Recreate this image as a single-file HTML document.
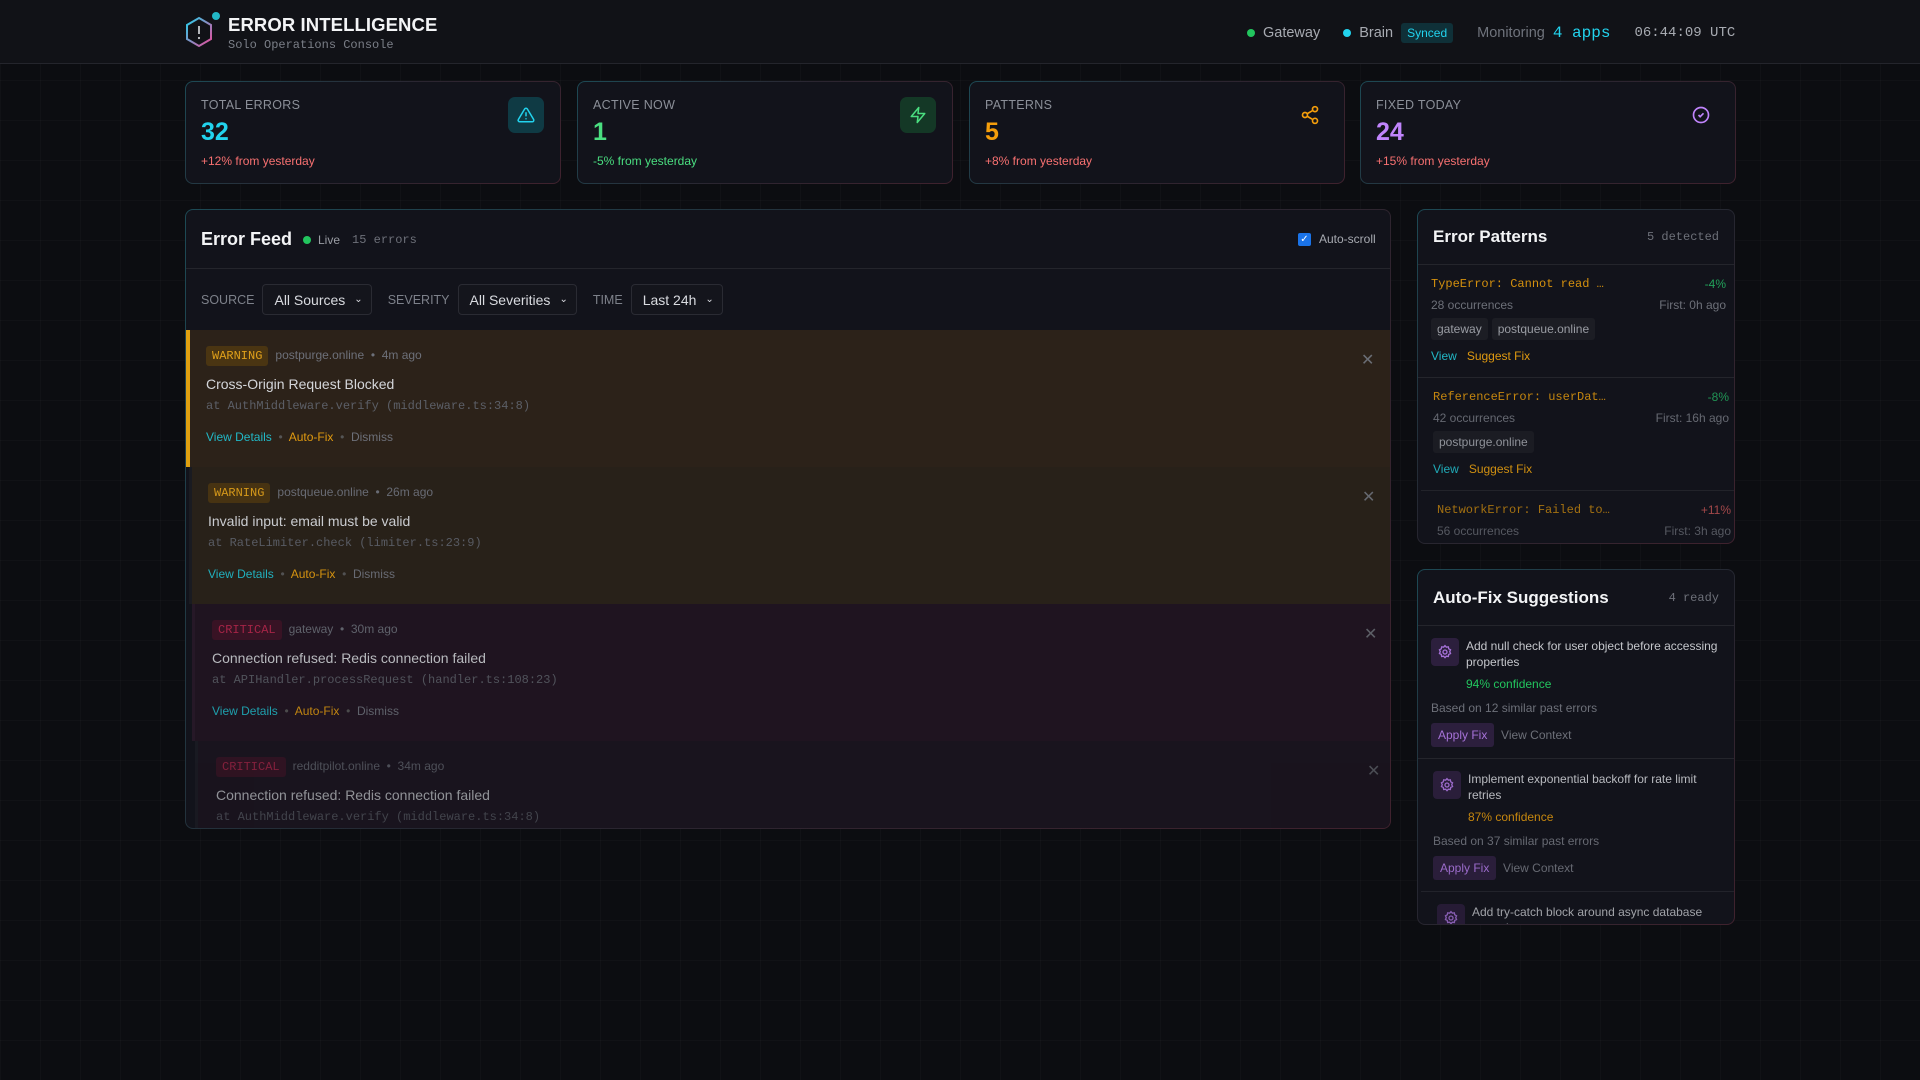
<!DOCTYPE html>
<html><head><meta charset="utf-8"><style>
*{box-sizing:border-box;margin:0;padding:0}
body{width:1920px;height:1080px;overflow:hidden;background:#0c0d11;font-family:"Liberation Sans",sans-serif;color:#e5e7eb;position:relative;
background-image:linear-gradient(rgba(255,255,255,0.018) 1px,transparent 1px),linear-gradient(90deg,rgba(255,255,255,0.018) 1px,transparent 1px);background-size:40px 40px}
.mono{font-family:"Liberation Mono",monospace}
.abs{position:absolute}
header{position:absolute;left:0;top:0;width:1920px;height:64px;background:#111217;border-bottom:1px solid #24252c}
.card{position:absolute;top:81px;width:376px;height:103px;border-radius:8px;border:1px solid transparent;
background:linear-gradient(#12131b,#12131b) padding-box,linear-gradient(135deg,#1d4a55,#2a2530 50%,#40222e) border-box}
.card .lab{position:absolute;left:15px;top:16px;font-size:12.5px;color:#8b8f98;letter-spacing:.3px}
.card .val{position:absolute;left:15px;top:36px;font-size:25px;font-weight:bold}
.card .sub{position:absolute;left:15px;top:72px;font-size:12px}
.card .ic{position:absolute;right:16px;top:15px;width:36px;height:36px;border-radius:7px;display:flex;align-items:center;justify-content:center}
.panel{position:absolute;border-radius:8px;border:1px solid transparent;overflow:hidden;
background:linear-gradient(#12131b,#12131b) padding-box,linear-gradient(135deg,#1d4a55,#262630 50%,#40222e) border-box}
.sel{display:inline-flex;align-items:center;height:31px;border:1px solid #2a2b33;background:#14151c;border-radius:4px;color:#d9dbe0;font-size:14px;padding:0 8px 0 11px;gap:9px}
.flab{font-size:12.5px;color:#7d818a;margin:0 8px 0 0}
.item{position:absolute;height:137px;width:1220px}
.badge{display:inline-block;font-family:"Liberation Mono",monospace;font-size:12px;padding:3px 6px;border-radius:3px}
.warn{background:#4a3512;color:#e0a01a}
.crit{background:#3f1426;color:#c0284f}
.meta{font-size:12px;color:#6d7079;margin-left:7px}
.ititle{position:absolute;top:46px;font-size:14px;color:#d4d6da}
.stack{position:absolute;top:69px;font-family:"Liberation Mono",monospace;font-size:12px;color:#5c5f67}
.acts{position:absolute;top:100px;font-size:12px}
.x{position:absolute;top:20px;font-size:16px;color:#6a6d74}
.pat{position:absolute;width:318px;border-bottom:1px solid #24252c}
.tag{display:inline-block;background:#1c1d24;color:#9a9da4;font-size:12px;padding:4px 6px;border-radius:3px;margin-right:4px}
.fix{position:absolute;width:318px;border-bottom:1px solid #24252c}
.gear{position:absolute;width:28px;height:28px;border-radius:4px;background:#2c1f3d;display:flex;align-items:center;justify-content:center}
.apply{display:inline-block;background:#2c1f3d;color:#a672d8;font-size:12px;padding:5px 7px;border-radius:3px}
</style></head><body>
<header>
 <svg class="abs" style="left:184px;top:15px" width="32" height="34" viewBox="0 0 32 34"><defs><linearGradient id="g" x1="0" y1="0" x2="1" y2="1"><stop offset="0" stop-color="#22d3ee"/><stop offset="1" stop-color="#ec4899"/></linearGradient></defs><polygon points="15,3 27,10 27,24 15,31 3,24 3,10" fill="none" stroke="url(#g)" stroke-width="2"/><line x1="15" y1="11" x2="15" y2="19" stroke="#c7c9ce" stroke-width="1.8"/><circle cx="15" cy="23" r="1.1" fill="#c7c9ce"/></svg>
 <div class="abs" style="left:212px;top:12px;width:8px;height:8px;border-radius:50%;background:#22b8c6"></div>
 <div class="abs" style="left:228px;top:14px;font-size:18.5px;font-weight:bold;color:#f3f4f6;letter-spacing:.1px">ERROR INTELLIGENCE</div>
 <div class="abs mono" style="left:228px;top:38px;font-size:12px;color:#7b7f88">Solo Operations Console</div>
 <div class="abs" style="left:1247px;top:23px;font-size:14.5px;color:#a7aab1;display:flex;align-items:center;white-space:nowrap">
  <span style="width:8px;height:8px;border-radius:50%;background:#22c55e;margin-right:8px"></span>Gateway
  <span style="width:8px;height:8px;border-radius:50%;background:#22d3ee;margin:0 8px 0 23px"></span>Brain
  <span style="background:#0f3038;color:#22d3ee;font-size:12px;padding:3px 6px;border-radius:3px;margin-left:8px">Synced</span>
  <span style="margin-left:24px;color:#6f737c">Monitoring</span><span class="mono" style="color:#22d3ee;font-size:16px;margin-left:8px">4 apps</span>
  <span class="mono" style="margin-left:24px;color:#a7aab1;font-size:14px">06:44:09 UTC</span>
 </div>
</header>

<div class="card" style="left:185px"><div class="lab">TOTAL ERRORS</div><div class="val" style="color:#22d3ee">32</div><div class="sub" style="color:#f87171">+12% from yesterday</div>
 <div class="ic" style="background:#0f3a44"><svg width="18" height="18" viewBox="0 0 24 24" fill="none" stroke="#22d3ee" stroke-width="2" stroke-linecap="round" stroke-linejoin="round"><path d="M10.3 3.9 1.8 18a2 2 0 0 0 1.7 3h17a2 2 0 0 0 1.7-3L13.7 3.9a2 2 0 0 0-3.4 0z"/><path d="M12 9v4M12 17h.01"/></svg></div></div>
<div class="card" style="left:577px"><div class="lab">ACTIVE NOW</div><div class="val" style="color:#4ade80">1</div><div class="sub" style="color:#4ade80">-5% from yesterday</div>
 <div class="ic" style="background:#143826"><svg width="18" height="18" viewBox="0 0 24 24" fill="none" stroke="#4ade80" stroke-width="2" stroke-linejoin="round"><path d="M13 2 3 14h9l-1 8 10-12h-9l1-8z"/></svg></div></div>
<div class="card" style="left:969px"><div class="lab">PATTERNS</div><div class="val" style="color:#f59e0b">5</div><div class="sub" style="color:#f87171">+8% from yesterday</div>
 <div class="ic"><svg width="20" height="20" viewBox="0 0 24 24" fill="none" stroke="#f59e0b" stroke-width="2"><circle cx="18" cy="5" r="3"/><circle cx="6" cy="12" r="3"/><circle cx="18" cy="19" r="3"/><path d="m8.6 13.5 6.8 4M15.4 6.5l-6.8 4"/></svg></div></div>
<div class="card" style="left:1360px"><div class="lab">FIXED TODAY</div><div class="val" style="color:#c084fc">24</div><div class="sub" style="color:#f87171">+15% from yesterday</div>
 <div class="ic"><svg width="20" height="20" viewBox="0 0 24 24" fill="none" stroke="#c084fc" stroke-width="2"><circle cx="12" cy="12" r="9"/><path d="m9 12 2 2 4-4"/></svg></div></div>

<div class="panel" style="left:185px;top:209px;width:1206px;height:620px">
 <div class="abs" style="left:0;top:0;width:100%;height:59px;border-bottom:1px solid #24252c"></div>
 <div class="abs" style="left:15px;top:19px;font-size:18px;font-weight:bold;color:#f3f4f6">Error Feed</div>
 <div class="abs" style="left:117px;top:23px;display:flex;align-items:center;font-size:12px;color:#9a9da4"><span style="width:8px;height:8px;border-radius:50%;background:#22c55e;margin-right:7px"></span>Live<span class="mono" style="margin-left:12px;color:#6d7079">15 errors</span></div>
 <div class="abs" style="left:1112px;top:22px;display:flex;align-items:center;font-size:12px;color:#a7aab1"><span style="width:13px;height:13px;border-radius:2px;background:#1a73e8;color:#fff;font-size:10px;line-height:13px;text-align:center;margin-right:8px">✓</span>Auto-scroll</div>
 <div class="abs" style="left:15px;top:74px;display:flex;align-items:center">
  <span class="flab">SOURCE</span><span class="sel">All Sources <span style="font-size:10px">⌄</span></span>
  <span class="flab" style="margin-left:16px">SEVERITY</span><span class="sel">All Severities <span style="font-size:10px">⌄</span></span>
  <span class="flab" style="margin-left:16px">TIME</span><span class="sel">Last 24h <span style="font-size:10px">⌄</span></span>
 </div>
 <div class="item" style="left:0;top:120px;background:#2c2219;border-left:4px solid #e0a010">
  <div class="abs" style="left:16px;top:16px"><span class="badge warn">WARNING</span><span class="meta">postpurge.online &nbsp;•&nbsp; 4m ago</span></div>
  <div class="ititle" style="left:16px">Cross-Origin Request Blocked</div>
  <div class="stack" style="left:16px">at AuthMiddleware.verify (middleware.ts:34:8)</div>
  <div class="acts" style="left:16px"><span style="color:#22b8c6">View Details</span> <span style="color:#555">&nbsp;•&nbsp;</span> <span style="color:#e09a10">Auto-Fix</span> <span style="color:#555">&nbsp;•&nbsp;</span> <span style="color:#6d7079">Dismiss</span></div>
  <div class="x" style="left:1171px">✕</div>
 </div>
 <div class="item" style="left:3px;top:257px;background:#2a2219;border-left:3px solid #1b1c22;opacity:.95">
  <div class="abs" style="left:16px;top:16px"><span class="badge warn">WARNING</span><span class="meta">postqueue.online &nbsp;•&nbsp; 26m ago</span></div>
  <div class="ititle" style="left:16px">Invalid input: email must be valid</div>
  <div class="stack" style="left:16px">at RateLimiter.check (limiter.ts:23:9)</div>
  <div class="acts" style="left:16px"><span style="color:#22b8c6">View Details</span> <span style="color:#555">&nbsp;•&nbsp;</span> <span style="color:#e09a10">Auto-Fix</span> <span style="color:#555">&nbsp;•&nbsp;</span> <span style="color:#6d7079">Dismiss</span></div>
  <div class="x" style="left:1170px">✕</div>
 </div>
 <div class="item" style="left:6px;top:394px;background:#221522;border-left:3px solid #2a1a2a;opacity:.85">
  <div class="abs" style="left:17px;top:16px"><span class="badge crit">CRITICAL</span><span class="meta">gateway &nbsp;•&nbsp; 30m ago</span></div>
  <div class="ititle" style="left:17px">Connection refused: Redis connection failed</div>
  <div class="stack" style="left:17px">at APIHandler.processRequest (handler.ts:108:23)</div>
  <div class="acts" style="left:17px"><span style="color:#22b8c6">View Details</span> <span style="color:#555">&nbsp;•&nbsp;</span> <span style="color:#e09a10">Auto-Fix</span> <span style="color:#555">&nbsp;•&nbsp;</span> <span style="color:#6d7079">Dismiss</span></div>
  <div class="x" style="left:1169px">✕</div>
 </div>
 <div class="item" style="left:9px;top:531px;background:#1e1520;border-left:3px solid #1e1e26;opacity:.65">
  <div class="abs" style="left:18px;top:16px"><span class="badge crit">CRITICAL</span><span class="meta">redditpilot.online &nbsp;•&nbsp; 34m ago</span></div>
  <div class="ititle" style="left:18px">Connection refused: Redis connection failed</div>
  <div class="stack" style="left:18px">at AuthMiddleware.verify (middleware.ts:34:8)</div>
  <div class="x" style="left:1169px">✕</div>
 </div>
</div>

<div class="panel" style="left:1417px;top:209px;width:318px;height:335px">
 <div class="abs" style="left:0;top:0;width:100%;height:55px;border-bottom:1px solid #24252c"></div>
 <div class="abs" style="left:15px;top:17px;font-size:17px;font-weight:bold;color:#f3f4f6">Error Patterns</div>
 <div class="abs mono" style="right:15px;top:20px;font-size:12px;color:#6d7079">5 detected</div>
 <div class="pat" style="left:0;top:55px;height:113px">
  <div class="abs mono" style="left:13px;top:12px;font-size:12px;color:#d4900e">TypeError: Cannot read …</div>
  <div class="abs" style="right:10px;top:12px;font-size:12px;color:#22a05a">-4%</div>
  <div class="abs" style="left:13px;top:33px;font-size:12px;color:#6d7079">28 occurrences</div>
  <div class="abs" style="right:10px;top:33px;font-size:12px;color:#6d7079">First: 0h ago</div>
  <div class="abs" style="left:13px;top:53px"><span class="tag">gateway</span><span class="tag">postqueue.online</span></div>
  <div class="abs" style="left:13px;top:84px;font-size:12px"><span style="color:#22b8c6">View</span>&nbsp;&nbsp; <span style="color:#e09a10">Suggest Fix</span></div>
 </div>
 <div class="pat" style="left:3px;top:168px;height:113px;opacity:.92">
  <div class="abs mono" style="left:12px;top:12px;font-size:12px;color:#d4900e">ReferenceError: userDat…</div>
  <div class="abs" style="right:10px;top:12px;font-size:12px;color:#22a05a">-8%</div>
  <div class="abs" style="left:12px;top:33px;font-size:12px;color:#6d7079">42 occurrences</div>
  <div class="abs" style="right:10px;top:33px;font-size:12px;color:#6d7079">First: 16h ago</div>
  <div class="abs" style="left:12px;top:53px"><span class="tag">postpurge.online</span></div>
  <div class="abs" style="left:12px;top:84px;font-size:12px"><span style="color:#22b8c6">View</span>&nbsp;&nbsp; <span style="color:#e09a10">Suggest Fix</span></div>
 </div>
 <div class="pat" style="left:7px;top:281px;height:113px;opacity:.75;border:none">
  <div class="abs mono" style="left:12px;top:12px;font-size:12px;color:#d4900e">NetworkError: Failed to…</div>
  <div class="abs" style="right:12px;top:12px;font-size:12px;color:#d45a5a">+11%</div>
  <div class="abs" style="left:12px;top:33px;font-size:12px;color:#6d7079">56 occurrences</div>
  <div class="abs" style="right:12px;top:33px;font-size:12px;color:#6d7079">First: 3h ago</div>
 </div>
</div>

<div class="panel" style="left:1417px;top:569px;width:318px;height:356px">
 <div class="abs" style="left:0;top:0;width:100%;height:56px;border-bottom:1px solid #24252c"></div>
 <div class="abs" style="left:15px;top:18px;font-size:17px;font-weight:bold;color:#f3f4f6">Auto-Fix Suggestions</div>
 <div class="abs mono" style="right:15px;top:21px;font-size:12px;color:#6d7079">4 ready</div>
 <div class="fix" style="left:0;top:56px;height:133px">
  <div class="gear" style="left:13px;top:12px"><svg width="16" height="16" viewBox="0 0 24 24" fill="none" stroke="#a672d8" stroke-width="2"><circle cx="12" cy="12" r="3"/><path d="M12 2.5l2 2.2 3-.4.6 3 2.7 1.4-1.2 2.8 1.2 2.8-2.7 1.4-.6 3-3-.4-2 2.2-2-2.2-3 .4-.6-3-2.7-1.4 1.2-2.8-1.2-2.8 2.7-1.4.6-3 3 .4z"/></svg></div>
  <div class="abs" style="left:48px;top:12px;width:260px;font-size:12px;line-height:16px;color:#c4c6cb">Add null check for user object before accessing properties</div>
  <div class="abs" style="left:48px;top:51px;font-size:12px;color:#22c55e">94% confidence</div>
  <div class="abs" style="left:13px;top:75px;font-size:12px;color:#6d7079">Based on 12 similar past errors</div>
  <div class="abs" style="left:13px;top:97px;font-size:12px"><span class="apply">Apply Fix</span>&nbsp; <span style="color:#6d7079">View Context</span></div>
 </div>
 <div class="fix" style="left:3px;top:189px;height:133px;opacity:.93">
  <div class="gear" style="left:12px;top:12px"><svg width="16" height="16" viewBox="0 0 24 24" fill="none" stroke="#a672d8" stroke-width="2"><circle cx="12" cy="12" r="3"/><path d="M12 2.5l2 2.2 3-.4.6 3 2.7 1.4-1.2 2.8 1.2 2.8-2.7 1.4-.6 3-3-.4-2 2.2-2-2.2-3 .4-.6-3-2.7-1.4 1.2-2.8-1.2-2.8 2.7-1.4.6-3 3 .4z"/></svg></div>
  <div class="abs" style="left:47px;top:12px;width:260px;font-size:12px;line-height:16px;color:#c4c6cb">Implement exponential backoff for rate limit retries</div>
  <div class="abs" style="left:47px;top:51px;font-size:12px;color:#d4900e">87% confidence</div>
  <div class="abs" style="left:12px;top:75px;font-size:12px;color:#6d7079">Based on 37 similar past errors</div>
  <div class="abs" style="left:12px;top:97px;font-size:12px"><span class="apply">Apply Fix</span>&nbsp; <span style="color:#6d7079">View Context</span></div>
 </div>
 <div class="fix" style="left:7px;top:322px;height:133px;opacity:.8;border:none">
  <div class="gear" style="left:12px;top:12px"><svg width="16" height="16" viewBox="0 0 24 24" fill="none" stroke="#a672d8" stroke-width="2"><circle cx="12" cy="12" r="3"/><path d="M12 2.5l2 2.2 3-.4.6 3 2.7 1.4-1.2 2.8 1.2 2.8-2.7 1.4-.6 3-3-.4-2 2.2-2-2.2-3 .4-.6-3-2.7-1.4 1.2-2.8-1.2-2.8 2.7-1.4.6-3 3 .4z"/></svg></div>
  <div class="abs" style="left:47px;top:12px;width:260px;font-size:12px;line-height:16px;color:#c4c6cb">Add try-catch block around async database operations</div>
 </div>
</div>
</body></html>
